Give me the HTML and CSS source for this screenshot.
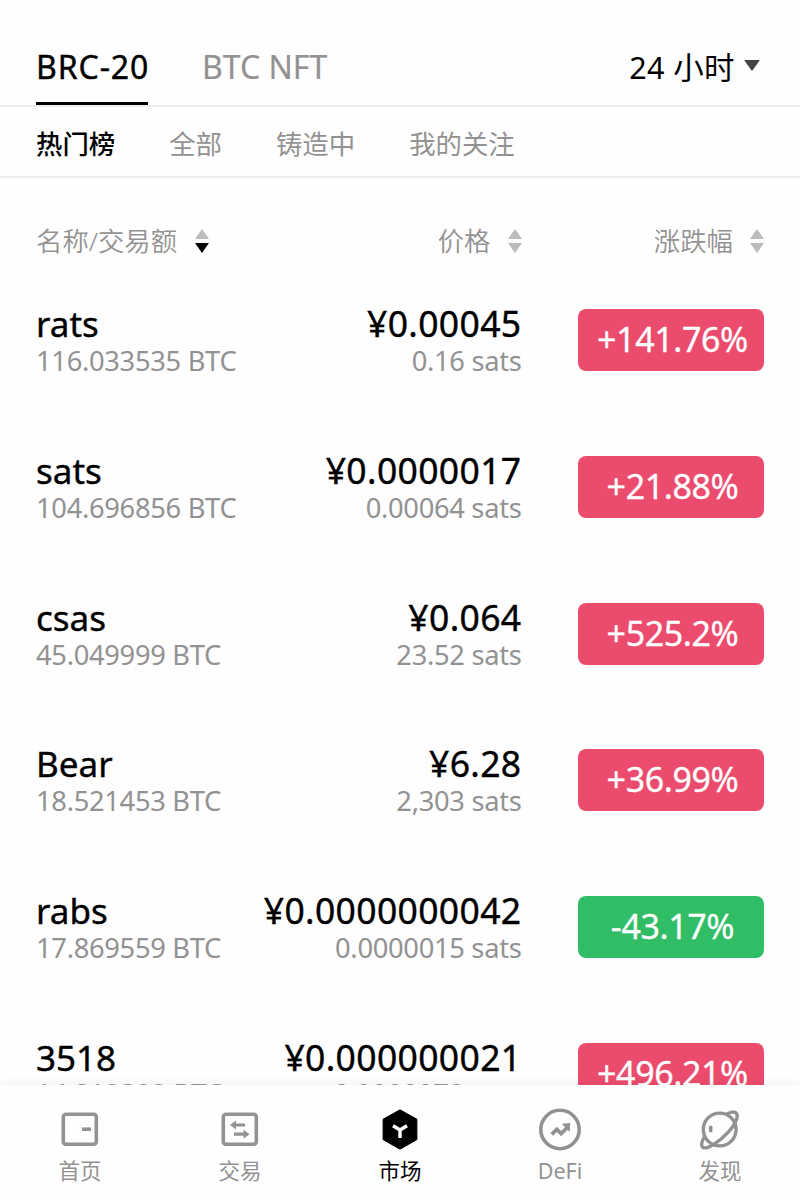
FILE: index.html
```html
<!DOCTYPE html>
<html lang="zh-CN">
<head>
    <meta charset="UTF-8">
    <meta name="viewport" content="width=device-width, initial-scale=1.0">
    <title>市场</title>
    <link rel="stylesheet" href="styles.css">
</head>
<body>

    <div class="app">
        <header class="top-tabs">
            <div class="tab active">BRC-20</div>
            <div class="tab">BTC NFT</div>
            <div class="period">24 小时
                <svg class="caret" viewBox="0 0 16 11"><path d="M1.2 0h13.6q1.2 0 .5 1L8.8 10q-.8 1-1.6 0L.7 1Q0 0 1.2 0z" fill="#444"/></svg>
            </div>
        </header>

        <nav class="sub-tabs">
            <span class="active">热门榜</span>
            <span>全部</span>
            <span>铸造中</span>
            <span>我的关注</span>
        </nav>

        <main class="market">
            <div class="row head">
                <div class="col-name">名称/交易额
                    <svg class="sort" viewBox="0 0 14 24"><path class="up" d="M7 0l7 10H0z"/><path class="down on" d="M0 14h14L7 24z"/></svg>
                </div>
                <div class="col-price">价格
                    <svg class="sort" viewBox="0 0 14 24"><path class="up" d="M7 0l7 10H0z"/><path class="down" d="M0 14h14L7 24z"/></svg>
                </div>
                <div class="col-change">涨跌幅
                    <svg class="sort" viewBox="0 0 14 24"><path class="up" d="M7 0l7 10H0z"/><path class="down" d="M0 14h14L7 24z"/></svg>
                </div>
            </div>

            <div class="row">
                <div class="col-name"><div class="name">rats</div><div class="sub">116.033535 BTC</div></div>
                <div class="col-price"><div class="price">¥0.00045</div><div class="sub">0.16 sats</div></div>
                <div class="badge">+141.76%</div>
            </div>
            <div class="row">
                <div class="col-name"><div class="name">sats</div><div class="sub">104.696856 BTC</div></div>
                <div class="col-price"><div class="price">¥0.0000017</div><div class="sub">0.00064 sats</div></div>
                <div class="badge">+21.88%</div>
            </div>
            <div class="row">
                <div class="col-name"><div class="name">csas</div><div class="sub">45.049999 BTC</div></div>
                <div class="col-price"><div class="price">¥0.064</div><div class="sub">23.52 sats</div></div>
                <div class="badge">+525.2%</div>
            </div>
            <div class="row">
                <div class="col-name"><div class="name">Bear</div><div class="sub">18.521453 BTC</div></div>
                <div class="col-price"><div class="price">¥6.28</div><div class="sub">2,303 sats</div></div>
                <div class="badge">+36.99%</div>
            </div>
            <div class="row">
                <div class="col-name"><div class="name">rabs</div><div class="sub">17.869559 BTC</div></div>
                <div class="col-price"><div class="price">¥0.0000000042</div><div class="sub">0.0000015 sats</div></div>
                <div class="badge down">-43.17%</div>
            </div>
            <div class="row">
                <div class="col-name"><div class="name">3518</div><div class="sub">14.812398 BTC</div></div>
                <div class="col-price"><div class="price">¥0.000000021</div><div class="sub">0.0000078 sats</div></div>
                <div class="badge">+496.21%</div>
            </div>
        </main>

        <footer class="bottom-nav">
            <div class="nav-item">
                <svg viewBox="0 0 44 44" fill="none" stroke="#929292" stroke-width="3.6">
                    <rect x="5.3" y="7.3" width="33" height="30" rx="2.5"/>
                    <path d="M24 22.2h9" stroke-width="3.6"/>
                </svg>
                <span>首页</span>
            </div>
            <div class="nav-item">
                <svg viewBox="0 0 44 44" fill="none" stroke="#929292" stroke-width="3.6">
                    <rect x="5.3" y="7.3" width="33" height="30" rx="2.5"/>
                    <path d="M16.500 18H27M16 27.200h11" stroke-width="3.2"/>
                    <path d="M12 18l6-4.500v9zM31.600 27.200l-6-4.500v9z" fill="#929292" stroke="none"/>
                </svg>
                <span>交易</span>
            </div>
            <div class="nav-item active">
                <svg viewBox="0 0 44 44">
                    <path d="M22 2.800l16.900 9.400v20.400L22 42.200 5.100 32.600V12.200z" fill="#000" stroke="#000" stroke-width="1" stroke-linejoin="round"/>
                    <path d="M15 18.700l7 4.300 7-4.300M22 22.700v8.300" fill="none" stroke="#fff" stroke-width="3.500"/>
                </svg>
                <span>市场</span>
            </div>
            <div class="nav-item">
                <svg viewBox="0 0 44 44" fill="none" stroke="#929292" stroke-width="3.600">
                    <circle cx="22" cy="22.500" r="19.200"/>
                    <path d="M13.700 27.400l5.100-5.100 4.400 4.200 6-6" stroke-width="3.800"/>
                    <path d="M23.700 16.700l8.600-.6-.7 8.800z" fill="#929292" stroke="none"/>
                </svg>
                <span>DeFi</span>
            </div>
            <div class="nav-item">
                <svg viewBox="0 0 44 44" fill="none" stroke="#929292" stroke-width="3.400" stroke-linecap="round">
                    <circle cx="21.700" cy="22.500" r="16.400"/>
                    <path d="M30 6.600c4.200-2.200 7.500-2.200 8.700.1 1.700 3.600-1.500 11-8.500 18.500C21.500 35 8.500 43.200 4.800 40.300c-1.900-1.500-1.300-5.700 1.200-9.700"/>
                    <path d="M12.700 20.200v3.600" stroke-width="3.600"/>
                </svg>
                <span>发现</span>
            </div>
        </footer>
    </div>

</body>
</html>
```
FILE: styles.css
```css
* {
    box-sizing: border-box;
}

body {
    margin: 0;
    background-color: #fefefe;
    font-family: "Noto Sans", "Noto Sans CJK SC", sans-serif;
    color: #000;
}

.app {
    height: 1200px;
    display: flex;
    flex-direction: column;
    overflow: hidden;
}

.top-tabs {
    display: flex;
    height: 107px;
    padding: 29px 40px 0 36px;
    border-bottom: 2px solid #ededed;
    font-size: 32px;
    line-height: 76px;
    flex-shrink: 0;
}

.tab {
    height: 76px;
    margin-right: 54px;
    color: #929292;
    -webkit-text-stroke: 0.2px;
    white-space: nowrap;
}

.tab.active {
    width: 112px;
    color: #000;
    letter-spacing: 0.9px;
    -webkit-text-stroke: 0.4px;
    border-bottom: 3px solid #000;
}

.period {
    margin-left: auto;
    display: flex;
    align-items: center;
    gap: 9px;
    font-size: 30.5px;
    letter-spacing: 0.4px;
}

.caret {
    width: 16px;
    height: 11px;
    margin-bottom: 4px;
}

.sub-tabs {
    display: flex;
    gap: 54px;
    height: 71px;
    padding-left: 36px;
    border-bottom: 2px solid #ededed;
    font-size: 26.4px;
    line-height: 74px;
    color: #929292;
    flex-shrink: 0;
}

.sub-tabs .active {
    color: #000;
    font-weight: 500;
}

.market {
    flex: 1;
    min-height: 0;
    overflow: hidden;
    padding: 0 36px;
}

.row {
    display: flex;
    align-items: flex-start;
    height: 146.8px;
}

.row.head {
    height: 131px;
    padding-top: 43px;
    font-size: 26.4px;
    font-weight: 350;
    line-height: 40px;
    color: #929292;
}

.head .col-name,
.head .col-price,
.head .col-change {
    display: flex;
    align-items: center;
    gap: 17px;
}

.head .col-name {
    gap: 18px;
}

.head .col-price,
.head .col-change {
    justify-content: flex-end;
}

.sort {
    width: 14px;
    height: 24px;
    margin-bottom: 1px;
}

.sort path {
    fill: #bcbcbc;
}

.sort .on {
    fill: #000;
}

.col-name {
    width: 225px;
    white-space: nowrap;
}

.col-price {
    width: 260.5px;
    text-align: right;
    white-space: nowrap;
}

.col-change {
    width: 242.5px;
}

.name,
.price {
    height: 33px;
    font-size: 35px;
    line-height: 29px;
    -webkit-text-stroke: 0.4px;
}

.price {
    font-size: 35.5px;
    letter-spacing: 0.35px;
}

.sub {
    font-size: 27.3px;
    line-height: 37px;
    letter-spacing: -0.3px;
    color: #929292;
}

.row:last-child .sub {
    font-size: 27.5px;
    line-height: 36px;
}

.badge {
    width: 186px;
    height: 62px;
    margin-left: auto;
    padding-left: 3px;
    border-radius: 8px;
    background-color: #eb4c6d;
    color: #fff;
    font-size: 34px;
    line-height: 61px;
    letter-spacing: -0.4px;
    -webkit-text-stroke: 0.3px;
    text-align: center;
}

.badge.down {
    background-color: #31bd65;
}

.bottom-nav {
    display: flex;
    height: 115px;
    background-color: #fefefe;
    box-shadow: 0 -2px 10px rgba(0, 0, 0, 0.05);
    position: relative;
    flex-shrink: 0;
}

.nav-item {
    width: 160px;
    padding-top: 22px;
    display: flex;
    flex-direction: column;
    align-items: center;
    font-size: 21.5px;
    line-height: 40px;
    color: #929292;
}

.nav-item svg {
    width: 44px;
    height: 44px;
}

.nav-item.active {
    color: #000;
}
```
